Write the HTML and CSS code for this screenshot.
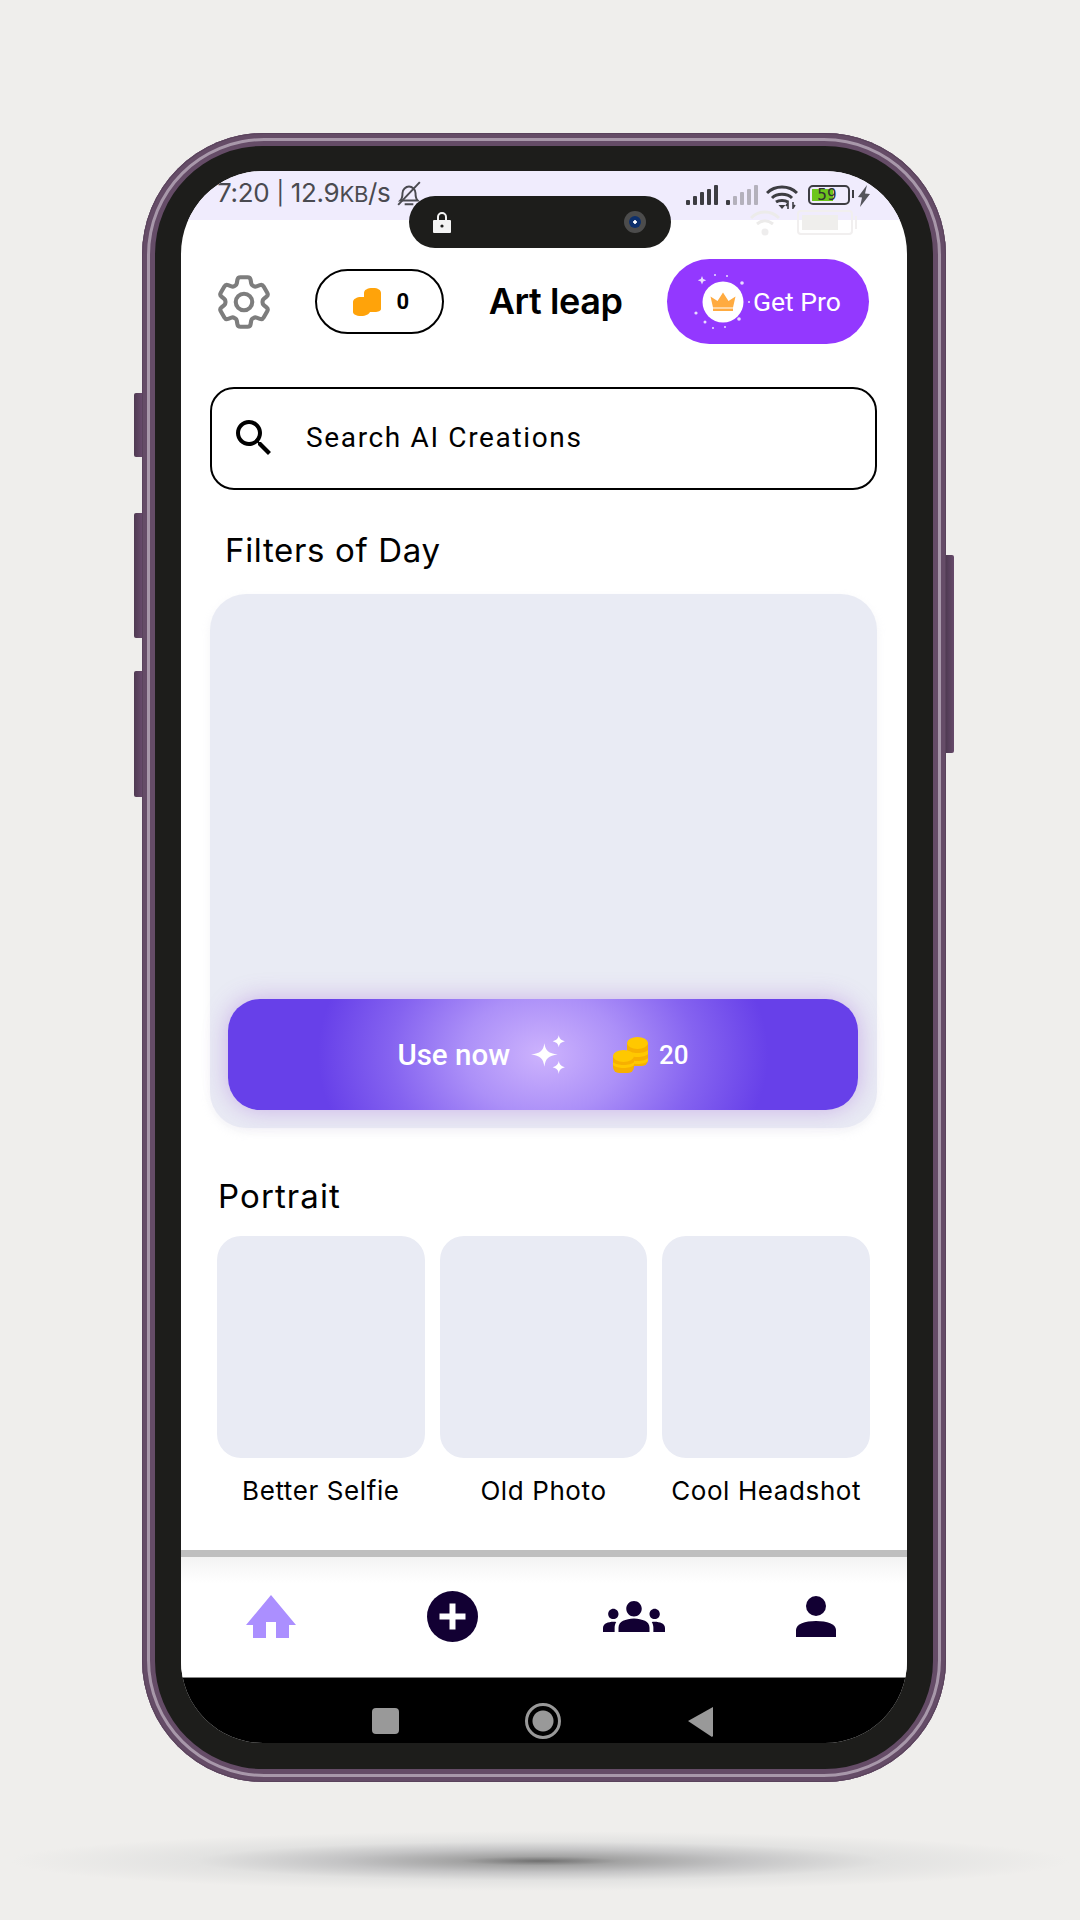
FILE: index.html
```html
<!doctype html>
<html>
  <head>
    <title>Art leap</title>
    <link rel="stylesheet" href="styles.css">
  </head>
  <body>
    <div class="phone">
      <span class="side-btn btn-mute"></span>
      <span class="side-btn btn-up"></span>
      <span class="side-btn btn-down"></span>
      <span class="side-btn btn-power"></span>

      <div class="screen">
        <div class="status-bar">
          <div class="status-left">
            <span>7:20 <span class="pipe">|</span> 12.9<small>KB</small>/s</span>
            <svg class="bell" viewBox="0 0 24 24" width="26" height="28" fill="none" stroke="#4a4a50" stroke-width="1.8">
              <path d="M4 18c2-2 2-4 2-7 0-3 3-6 6-6s6 3 6 6c0 3 0 5 2 7z"/>
              <path d="M8 21.500h8"/>
              <path d="M2 22 22 1"/>
            </svg>
          </div>
          <div class="status-right">
            <svg viewBox="0 0 32 20" width="32" height="20" fill="#3d3d42">
              <rect x="0" y="15" width="4" height="5" rx="1"/>
              <rect x="7" y="11" width="4" height="9" rx="1"/>
              <rect x="14" y="7" width="4" height="13" rx="1"/>
              <rect x="21" y="4" width="4" height="16" rx="1"/>
              <rect x="28" y="0" width="4" height="20" rx="1"/>
            </svg>
            <svg viewBox="0 0 32 20" width="32" height="20" fill="#b4b1bc">
              <rect x="0" y="15" width="4" height="5" rx="1" fill="#3d3d42"/>
              <rect x="7" y="11" width="4" height="9" rx="1"/>
              <rect x="14" y="7" width="4" height="13" rx="1"/>
              <rect x="21" y="4" width="4" height="16" rx="1"/>
              <rect x="28" y="0" width="4" height="20" rx="1"/>
            </svg>
            <svg viewBox="0 0 32 24" width="32" height="24" fill="none" stroke="#3d3d42" stroke-width="3">
              <path d="M1 8c8-8 22-8 30 0"/>
              <path d="M6 13c5-5 15-5 20 0"/>
              <path d="M10 17c3-2 9-2 12 0"/>
              <path d="M12.500 20h7L16 24z" fill="#3d3d42" stroke="none"/>
              <path d="M22 24v-6l-2 3M27 17v6l2-3" stroke-width="1.600"/>
            </svg>
            <div class="battery"><span class="battery-fill"></span><span class="battery-num">59</span></div>
            <svg viewBox="0 0 12 22" width="12" height="22" fill="#55555c"><path d="M9 0 0 12l4 .5L2 22l10-13-5-.5z"/></svg>
          </div>
        </div>

        <div class="island">
          <svg viewBox="0 0 18 22" width="18" height="22" fill="#f4f4f4">
            <path d="M4 9V6a5 5 0 0 1 10 0v3h-2V6a3 3 0 0 0-6 0v3z"/>
            <rect x="0" y="9" width="18" height="13" rx="1"/>
            <circle cx="9" cy="15" r="1.6" fill="#1d1d1b"/>
          </svg>
          <span class="camera"><span class="camera-lens"></span></span>
        </div>

        <div class="ghost-icons">
          <svg viewBox="0 0 30 26" width="30" height="26" fill="none" stroke="#ecebea" stroke-width="3">
            <path d="M1 8c8-8 20-8 28 0"/>
            <path d="M7 14c5-4 11-4 16 0"/>
            <circle cx="15" cy="22" r="3.5" fill="#eeeded" stroke="none"/>
          </svg>
          <div class="ghost-battery"><span class="ghost-fill"></span></div>
          <span class="ghost-nib"></span>
        </div>

        <main class="content">
          <header class="top-row">
            <svg class="gear" viewBox="0 0 24 24" width="66" height="66" fill="none" stroke="#7d7d7d" stroke-width="1.500">
              <path d="M9.594 3.94c.09-.542.56-.94 1.11-.94h2.593c.55 0 1.02.398 1.11.94l.213 1.281c.063.374.313.686.645.87.074.04.147.083.22.127.324.196.72.257 1.075.124l1.217-.456a1.125 1.125 0 011.37.49l1.296 2.247a1.125 1.125 0 01-.26 1.431l-1.003.827c-.293.24-.438.613-.431.992a6.759 6.759 0 010 .255c-.007.378.138.75.43.99l1.005.828c.424.35.534.954.26 1.43l-1.298 2.247a1.125 1.125 0 01-1.369.491l-1.217-.456c-.355-.133-.75-.072-1.076.124a6.57 6.57 0 01-.22.128c-.331.183-.581.495-.644.869l-.213 1.28c-.09.543-.56.941-1.11.941h-2.594c-.55 0-1.02-.398-1.11-.94l-.213-1.281c-.062-.374-.312-.686-.644-.87a6.52 6.52 0 01-.22-.127c-.325-.196-.72-.257-1.076-.124l-1.217.456a1.125 1.125 0 01-1.369-.49l-1.297-2.247a1.125 1.125 0 01.26-1.431l1.004-.827c.292-.24.437-.613.43-.992a6.932 6.932 0 010-.255c.007-.378-.138-.75-.43-.99l-1.004-.828a1.125 1.125 0 01-.26-1.43l1.297-2.247a1.125 1.125 0 011.37-.491l1.216.456c.356.133.751.072 1.076-.124.072-.044.146-.087.22-.128.332-.183.582-.495.644-.869l.214-1.281z"/>
              <circle cx="12" cy="12" r="3"/>
            </svg>
            <div class="coin-pill">
              <svg viewBox="0 0 28 28" width="28" height="28" fill="#ffa30a">
                <path d="M11 5c0-3 3-5 9-5 5 0 8 2 8 5v16c0 2-3 3-6 3h-5c-1 2-4 4-9 4-5 0-8-2-8-4V14c0-3 4-5 8-5h3z"/>
              </svg>
              <span>0</span>
            </div>
            <h1 class="app-title">Art leap</h1>
            <button class="pro-btn">
              <svg class="pro-badge" viewBox="0 0 60 60" width="60" height="60">
                <g fill="#e9dcff">
                  <path d="M9 4l1.2 3 3 1.2-3 1.2L9 12.400 7.800 9.400l-3-1.200 3-1.200z"/>
                  <circle cx="22" cy="3" r="1"/><circle cx="34" cy="4" r="1"/>
                  <circle cx="49" cy="11" r="1.800"/><circle cx="3" cy="41" r="1.600"/>
                  <circle cx="12" cy="50" r="1.500"/><circle cx="20" cy="56" r="1"/>
                  <circle cx="32" cy="55" r="1"/><circle cx="46" cy="47" r="1.800"/>
                  <circle cx="56" cy="30" r="1"/>
                </g>
                <circle cx="30" cy="30" r="20.500" fill="#fff"/>
                <path d="M20 39h20v-2.500H20zM20 35.500h20l2.500-11-7 4.500L30 20.500 24.500 29l-7-4.500z" fill="#ffab40"/>
              </svg>
              <span>Get Pro</span>
            </button>
          </header>

          <div class="search-box">
            <svg viewBox="0 0 24 24" width="48" height="48" fill="#000">
              <path d="M15.5 14h-.79l-.28-.27C15.41 12.59 16 11.11 16 9.500 16 5.910 13.090 3 9.500 3S3 5.910 3 9.500 5.910 16 9.500 16c1.610 0 3.090-.590 4.230-1.570l.270.280v.790l5 4.990L20.490 19l-4.990-5zm-6 0C7.010 14 5 11.990 5 9.500S7.010 5 9.500 5 14 7.010 14 9.500 11.990 14 9.500 14z"/>
            </svg>
            <span>Search AI Creations</span>
          </div>

          <h2 class="day-title">Filters of Day</h2>

          <section class="day-card">
            <button class="use-btn">
              <span class="use-label">Use now</span>
              <svg class="sparkle" viewBox="0 0 34 38" width="35" height="39" fill="#fff">
                <path d="M13 8c1 7 4 10 13 11-9 1-12 4-13 12-1-8-4-11-13-12 9-1 12-4 13-11z"/>
                <path d="M27 0c.5 3.500 2 5 6 6-4 1-5.500 2.500-6 6-.5-3.500-2-5-6-6 4-1 5.500-2.500 6-6z"/>
                <path d="M27 25c.5 3.500 2 5 6 6.500-4 1-5.500 2.500-6 6.500-.5-4-2-5.500-6-6.500 4-1.500 5.500-3 6-6.500z"/>
              </svg>
              <svg class="coins" viewBox="0 0 36 36" width="36" height="36">
                <rect x="14" y="2" width="21" height="27" rx="6" fill="#f7b000"/>
                <ellipse cx="24.500" cy="6" rx="10.500" ry="6" fill="#ffc800"/>
                <path d="M14 13c3 4 18 4 21 0v4c-3 4-18 4-21 0zM14 21c3 4 18 4 21 0v3c-3 4-18 4-21 0z" fill="#ffc800"/>
                <rect x="0" y="15" width="21" height="21" rx="6" fill="#f7b000"/>
                <ellipse cx="10.500" cy="19" rx="10.500" ry="6" fill="#ffc800"/>
                <path d="M0 25c3 4 18 4 21 0v3c-3 4-18 4-21 0z" fill="#ffc800"/>
              </svg>
              <span class="use-cost">20</span>
            </button>
          </section>

          <h2 class="portrait-title">Portrait</h2>

          <div class="tile-row">
            <div class="tile"><div class="tile-thumb"></div><p>Better Selfie</p></div>
            <div class="tile"><div class="tile-thumb"></div><p>Old Photo</p></div>
            <div class="tile"><div class="tile-thumb"></div><p>Cool Headshot</p></div>
          </div>
        </main>

        <nav class="tab-bar">
          <svg viewBox="0 0 50 43" width="50" height="43" fill="#ab8fff">
            <path d="M25 0 50 30h-7v13H30V27H20v16H7V30H0z"/>
          </svg>
          <svg viewBox="0 0 51 51" width="51" height="51">
            <circle cx="25.500" cy="25.500" r="25.500" fill="#120033"/>
            <path d="M22.500 12.500h6v10h10v6h-10v10h-6v-10h-10v-6h10z" fill="#fff"/>
          </svg>
          <svg viewBox="0 6 24 12" width="62" height="31" fill="#120033">
            <path d="M12 12.750c1.630 0 3.070.390 4.240.900 1.080.480 1.760 1.560 1.760 2.730V18H6v-1.610c0-1.180.680-2.260 1.760-2.730 1.170-.520 2.610-.910 4.240-.910zM4 13c1.100 0 2-.900 2-2s-.900-2-2-2-2 .900-2 2 .900 2 2 2zm1.130 1.100c-.370-.060-.740-.100-1.130-.100-.990 0-1.930.210-2.780.580C.480 14.900 0 15.620 0 16.430V18h4.500v-1.610c0-.830.230-1.610.630-2.290zM20 13c1.100 0 2-.900 2-2s-.900-2-2-2-2 .900-2 2 .900 2 2 2zm4 3.430c0-.810-.480-1.530-1.220-1.850-.850-.370-1.790-.580-2.780-.580-.390 0-.760.040-1.130.100.400.680.630 1.460.630 2.290V18H24v-1.570zM12 6c1.660 0 3 1.340 3 3s-1.340 3-3 3-3-1.340-3-3 1.340-3 3-3z"/>
          </svg>
          <svg viewBox="0 0 40 41" width="40" height="41" fill="#120033">
            <circle cx="20" cy="10" r="10"/>
            <path d="M0 41v-7c0-6 9-9 20-9s20 3 20 9v7z"/>
          </svg>
        </nav>

        <div class="android-nav">
          <span class="nav-square"></span>
          <span class="nav-circle"></span>
          <svg viewBox="0 0 25 31" width="25" height="31" fill="#999"><path d="M25 1v29l-1 1L0 15z"/></svg>
        </div>
      </div>
    </div>

    <div class="floor-shadow"></div>
  </body>
</html>
```

FILE: styles.css
```css
* { box-sizing: border-box; }

body {
  margin: 0;
  width: 1080px;
  height: 1920px;
  overflow: hidden;
  background: #efeeec;
  font-family: Roboto, sans-serif;
  color: #000;
}

/* phone body */
.phone {
  position: relative;
  width: 804px;
  height: 1649px;
  margin: 133px 0 0 142px;
  padding: 13px;
  border-radius: 122px;
  background: #654c67;
  box-shadow: inset 0 0 0 1px #5a435c, inset 0 0 0 5px #654c67, inset 0 0 0 8px #a898aa;
}
.side-btn {
  position: absolute;
  width: 8px;
  background: linear-gradient(to right, #4f3a52, #674a6b);
  border-radius: 2px 0 0 2px;
}
.btn-mute { left: -8px; top: 260px; height: 64px; }
.btn-up { left: -8px; top: 380px; height: 125px; }
.btn-down { left: -8px; top: 538px; height: 126px; }
.btn-power {
  right: -8px;
  top: 422px;
  height: 198px;
  border-radius: 0 2px 2px 0;
}

.screen {
  position: relative;
  display: flex;
  flex-direction: column;
  width: 778px;
  height: 1623px;
  border: solid #1d1d1b;
  border-width: 25px 26px 26px;
  border-radius: 108px;
  background: #fff;
  overflow: hidden;
}

/* status bar */
.status-bar {
  display: flex;
  justify-content: space-between;
  height: 49px;
  padding: 9px 37px 0 36px;
  background: #f0ecfd;
  color: #4a4a50;
  font-family: Inter, sans-serif;
  font-size: 26px;
  line-height: 26px;
}
.status-left { display: flex; gap: 5px; letter-spacing: -0.3px; }
.status-left small { font-size: 22px; }
.pipe { font-size: 23px; position: relative; top: -1px; }
.status-right { display: flex; align-items: flex-start; gap: 8px; padding-top: 5px; }
.battery {
  position: relative;
  width: 42px;
  height: 20px;
  margin-left: 2px;
  padding: 2px;
  border: 2px solid #3d3d42;
  border-radius: 5px;
  font: 16px/16px "DejaVu Sans Mono", monospace;
  color: #333;
  text-align: center;
}
.battery::after {
  content: "";
  position: absolute;
  right: -6px;
  top: 3px;
  width: 2px;
  height: 8px;
  background: #3d3d42;
}
.battery-fill {
  position: absolute;
  left: 2px;
  top: 2px;
  bottom: 2px;
  width: 21px;
  background: #6cc51d;
}
.battery-num { position: relative; top: -2px; left: -2px; }

.island {
  position: absolute;
  top: 25px;
  left: 228px;
  width: 262px;
  height: 52px;
  padding: 0 25px 0 24px;
  display: flex;
  align-items: center;
  justify-content: space-between;
  border-radius: 26px;
  background: #1d1d1b;
}
.camera {
  display: flex;
  align-items: center;
  justify-content: center;
  width: 22px;
  height: 22px;
  border-radius: 50%;
  background: #4c4c4c;
}
.camera-lens {
  width: 12px;
  height: 12px;
  border-radius: 50%;
  background: radial-gradient(circle, #fff 0 1.5px, #0d2f6b 2px);
}

.ghost-icons {
  position: absolute;
  top: 39px;
  left: 569px;
  display: flex;
  gap: 17px;
}
.ghost-battery {
  width: 56px;
  height: 25px;
  padding: 3px;
  border: 2px solid #f1efef;
  border-radius: 4px;
}
.ghost-fill { display: block; width: 36px; height: 100%; background: #efeeec; }
.ghost-nib {
  width: 2px;
  height: 13px;
  margin: 6px 0 0 -15px;
  background: #f1efef;
}

/* main content */
.content { flex: 1; }

.top-row {
  display: flex;
  align-items: center;
  justify-content: space-between;
  height: 85px;
  margin: 39px 38px 0 36px;
}
.gear { margin: 0 -6px; filter: blur(0.5px); }
.coin-pill {
  display: flex;
  align-items: center;
  justify-content: center;
  gap: 16px;
  width: 129px;
  height: 65px;
  padding-left: 2px;
  border: 2px solid #000;
  border-radius: 33px;
  font-size: 22px;
  font-weight: 700;
}
.app-title {
  margin: -2px 0 0;
  font-size: 36px;
  font-weight: 600;
  font-family: Inter, sans-serif;
  letter-spacing: -0.4px;
}
.pro-btn {
  display: flex;
  align-items: center;
  width: 202px;
  height: 85px;
  padding: 0 0 0 26px;
  border: none;
  border-radius: 43px;
  background: #9338ff;
  color: #fff;
  font: 400 26.5px Roboto, sans-serif;
}

.search-box {
  display: flex;
  align-items: center;
  gap: 28px;
  height: 103px;
  margin: 43px 30px 0 29px;
  padding-left: 18px;
  padding-bottom: 2px;
  border: 2px solid #000;
  border-radius: 24px;
  font-size: 28px;
  letter-spacing: 1.65px;
}

.day-title, .portrait-title {
  margin: 0;
  font-family: Inter, sans-serif;
  font-weight: 400;
  font-size: 33px;
  line-height: 40px;
  letter-spacing: 0.65px;
}
.day-title { margin: 40px 0 24px 44px; }

.day-card {
  display: flex;
  align-items: flex-end;
  height: 534px;
  margin: 0 30px 0 29px;
  padding: 0 19px 18px 18px;
  border-radius: 36px;
  background: #e9ebf4;
  box-shadow: 0 4px 10px rgba(200, 200, 215, 0.2);
}
.use-btn {
  display: flex;
  align-items: center;
  justify-content: center;
  width: 100%;
  height: 111px;
  border: none;
  border-radius: 32px;
  background: radial-gradient(ellipse 225px 170px at 50% 50%, #cdb3fd 0%, #ac90f8 35%, #8563f0 68%, #6740e9 100%);
  box-shadow: 0 0 24px rgba(150, 80, 210, 0.38);
  color: #fff;
  font: 500 29.5px Roboto, sans-serif;
}
.sparkle { margin-left: 21px; }
.coins { margin-left: 47px; }
.use-cost { margin-left: 10px; font-size: 26px; }

.portrait-title { margin: 48px 0 20px 37px; letter-spacing: 1.1px; }

.tile-row {
  display: grid;
  grid-template-columns: repeat(3, 1fr);
  gap: 15px;
  margin: 0 37px 0 36px;
}
.tile-thumb {
  height: 222px;
  border-radius: 24px;
  background: #e9ebf4;
}
.tile p {
  margin: 16px -10px 0;
  font-family: Inter, sans-serif;
  font-size: 26px;
  line-height: 33px;
  letter-spacing: 0.6px;
  text-align: center;
}

/* bottom bars */
.tab-bar {
  display: flex;
  align-items: center;
  height: 127px;
  padding-bottom: 1px;
  border-top: 7px solid #bfbfbf;
  background: linear-gradient(to bottom, #f3f3f3, #fff 26px);
}
.tab-bar svg:nth-child(1) { margin-left: 65px; }
.tab-bar svg:nth-child(2) { margin-left: 131px; }
.tab-bar svg:nth-child(3) { margin-left: 125px; }
.tab-bar svg:nth-child(4) { margin-left: 131px; }

.android-nav {
  display: flex;
  align-items: center;
  height: 66px;
  padding: 21px 0 0 191px;
  background: #000;
  border-top: 1px solid #888;
}
.nav-square {
  width: 27px;
  height: 26px;
  border-radius: 4px;
  background: #999;
}
.nav-circle {
  width: 36px;
  height: 36px;
  margin-left: 126px;
  border: 3px solid #999;
  border-radius: 50%;
  background: radial-gradient(circle, #999 0 10px, #000 11px);
}
.android-nav svg { margin-left: 127px; }

.floor-shadow {
  width: 1060px;
  height: 60px;
  margin: 49px 0 0 10px;
  background: radial-gradient(ellipse closest-side, #707070 0%, #a3a3a3 15%, #c4c4c5 38%, #e2e2e1 65%, #efeeec 100%);
}
```
